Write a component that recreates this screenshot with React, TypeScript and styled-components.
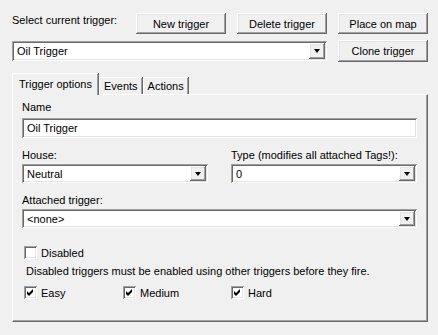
import React from 'react'
import styled, { createGlobalStyle } from 'styled-components'

const GlobalStyle = createGlobalStyle`
  body {
    margin: 0;
    background: #f0f0f0;
  }
`

const raised = `
  box-shadow: inset -1px -1px #696969, inset 1px 1px #ffffff,
    inset -2px -2px #a0a0a0, inset 2px 2px #e3e3e3;
`

const sunken = `
  box-shadow: inset 1px 1px #a0a0a0, inset -1px -1px #ffffff,
    inset 2px 2px #696969, inset -2px -2px #e3e3e3;
`

const Dialog = styled.div`
  width: 438px;
  height: 335px;
  box-sizing: border-box;
  background: #f0f0f0;
  padding: 13px 0 0 12px;
  font-family: "Liberation Sans", Arial, sans-serif;
  font-size: 11px;
  color: #000;
`

const TopGrid = styled.div`
  display: grid;
  grid-template-columns: 113px 90px 90px 90px;
  grid-template-rows: 21px 22px;
  column-gap: 11px;
  row-gap: 6px;
  align-items: center;
`

const TopLabel = styled.div`
  align-self: start;
  padding-top: 1px;
`

const Button = styled.button<{ $tall?: boolean }>`
  height: ${p => (p.$tall ? 22 : 21)}px;
  border: none;
  background: #f0f0f0;
  font: inherit;
  color: #000;
  padding: 0;
  ${raised}
`

const ComboBox = styled.div<{ $span?: string; $height?: number }>`
  ${p => (p.$span ? `grid-column: ${p.$span};` : '')}
  height: ${p => p.$height ?? 19}px;
  box-sizing: border-box;
  background: #fff;
  ${sunken}
  display: flex;
  align-items: stretch;
  padding: 2px;
`

const ComboText = styled.div`
  flex: 1;
  padding-left: 3px;
  display: flex;
  align-items: center;
`

const DropButton = styled.div`
  width: 16px;
  background: #f0f0f0;
  ${raised}
  display: flex;
  align-items: center;
  justify-content: center;
`

const Arrow = styled.div`
  width: 0;
  height: 0;
  border-left: 3.5px solid transparent;
  border-right: 3.5px solid transparent;
  border-top: 4px solid #000;
`

const TabStrip = styled.div`
  display: flex;
  align-items: flex-end;
  margin-top: 11px;
  height: 21px;
  position: relative;
  z-index: 1;
`

const Tab = styled.div<{ $active?: boolean }>`
  height: ${p => (p.$active ? 22 : 17)}px;
  box-sizing: border-box;
  padding: 0 ${p => (p.$active ? 6 : 4)}px;
  display: flex;
  align-items: center;
  background: #f0f0f0;
  border-top: 1px solid #fff;
  border-left: 1px solid #fff;
  box-shadow: inset -1px 0 #a0a0a0, 1px 0 #696969;
  margin-right: 1px;
  ${p => (p.$active ? 'margin-bottom: -1px; padding-bottom: 2px;' : '')}
`

const Pane = styled.div`
  width: 416px;
  height: 228px;
  box-sizing: border-box;
  border-top: 1px solid #fff;
  border-left: 1px solid #fff;
  border-right: 1px solid #696969;
  border-bottom: 1px solid #696969;
  box-shadow: inset -1px -1px #a0a0a0;
  padding: 6px 10px 0 9px;
  display: flex;
  flex-direction: column;
`

const Label = styled.div<{ $top?: number }>`
  height: 13px;
  line-height: 13px;
  margin-top: ${p => p.$top ?? 0}px;
  margin-bottom: 2px;
`

const TextField = styled.div`
  height: 20px;
  box-sizing: border-box;
  background: #fff;
  ${sunken}
  display: flex;
  align-items: center;
  padding-left: 5px;
  margin-top: 2px;
`

const TwoCols = styled.div`
  display: grid;
  grid-template-columns: 186px 186px;
  column-gap: 23px;
  margin-top: 11px;
`

const CheckRow = styled.div<{ $top: number }>`
  display: grid;
  grid-template-columns: 99px 108px 100px;
  margin-top: ${p => p.$top}px;
  padding-left: 2px;
`

const Check = styled.label`
  display: flex;
  align-items: center;
  gap: 4px;
  height: 13px;
`

const Box = styled.span`
  width: 13px;
  height: 13px;
  box-sizing: border-box;
  background: #fff;
  ${sunken}
  display: flex;
  align-items: center;
  justify-content: center;
`

const Note = styled.div`
  margin-top: 6px;
  padding-left: 4px;
  height: 13px;
  line-height: 13px;
`

function Tick() {
  return (
    <svg width="7" height="7" viewBox="0 0 7 7">
      <path d="M0 2 L2 4 L6 0 L6 3 L2 7 L0 5 Z" fill="#000" />
    </svg>
  )
}

function Combo({ value, span, height }: { value: string; span?: string; height?: number }) {
  return (
    <ComboBox $span={span} $height={height}>
      <ComboText>{value}</ComboText>
      <DropButton>
        <Arrow />
      </DropButton>
    </ComboBox>
  )
}

function CheckBox({ label, checked }: { label: string; checked?: boolean }) {
  return (
    <Check>
      <Box>{checked && <Tick />}</Box>
      {label}
    </Check>
  )
}

export default function App() {
  return (
    <>
      <GlobalStyle />
      <Dialog>
        <TopGrid>
          <TopLabel>Select current trigger:</TopLabel>
          <Button>New trigger</Button>
          <Button>Delete trigger</Button>
          <Button>Place on map</Button>
          <Combo value="Oil Trigger" span="1 / 4" height={20} />
          <Button $tall>Clone trigger</Button>
        </TopGrid>

        <TabStrip>
          <Tab $active>Trigger options</Tab>
          <Tab>Events</Tab>
          <Tab>Actions</Tab>
        </TabStrip>
        <Pane>
          <Label>Name</Label>
          <TextField>Oil Trigger</TextField>

          <TwoCols>
            <div>
              <Label>House:</Label>
              <Combo value="Neutral" />
            </div>
            <div>
              <Label>Type (modifies all attached Tags!):</Label>
              <Combo value="0" />
            </div>
          </TwoCols>

          <Label $top={11}>Attached trigger:</Label>
          <Combo value="<none>" />

          <CheckRow $top={18}>
            <CheckBox label="Disabled" />
          </CheckRow>
          <Note>Disabled triggers must be enabled using other triggers before they fire.</Note>
          <CheckRow $top={8}>
            <CheckBox label="Easy" checked />
            <CheckBox label="Medium" checked />
            <CheckBox label="Hard" checked />
          </CheckRow>
        </Pane>
      </Dialog>
    </>
  )
}
